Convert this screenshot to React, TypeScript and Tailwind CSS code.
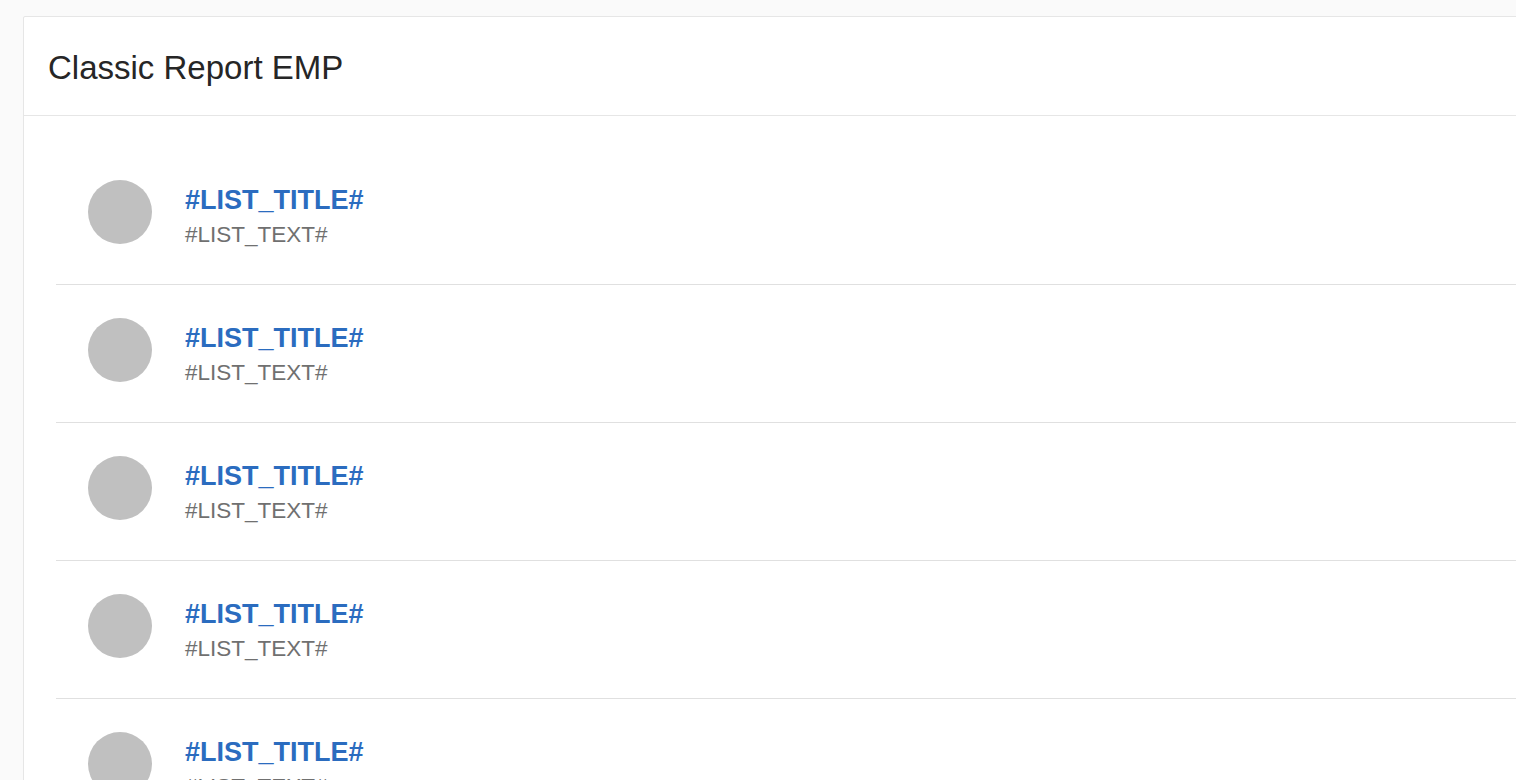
import React from 'react';

const rows = [1, 2, 3, 4, 5];

const App = () => {
  return (
    <div
      className="h-[780px] w-full overflow-hidden bg-[#fafafa] pt-[16px] pl-[23px]"
      style={{ fontFamily: '"Liberation Sans", Arial, sans-serif' }}
    >
      <div className="w-[1540px] h-[900px] bg-white border border-[#e6e6e6] rounded-tl-[2px]">
        {/* Region header */}
        <div className="h-[99px] border-b border-[#e6e6e6] flex items-center pl-[24px]">
          <h2 className="text-[33px] leading-none text-[#262626] pt-[2px]">Classic Report EMP</h2>
        </div>

        {/* Media list */}
        <ul className="ml-[32px] pt-[31px]">
          {rows.map((r) => (
            <li
              key={r}
              className="h-[138px] border-b border-[#e0e0e0] flex items-start pt-[33px] pl-[32px]"
            >
              <span className="w-[64px] h-[64px] rounded-full bg-[#c0c0c0] shrink-0"></span>
              <div className="ml-[33px] pt-[4px]">
                <a href="#" className="block text-[27px] leading-[32px] font-bold text-[#2b6cbf]">
                  #LIST_TITLE#
                </a>
                <p className="mt-[5px] text-[22.5px] leading-[28px] text-[#707070]">#LIST_TEXT#</p>
              </div>
            </li>
          ))}
        </ul>
      </div>
    </div>
  );
};

export default App;
